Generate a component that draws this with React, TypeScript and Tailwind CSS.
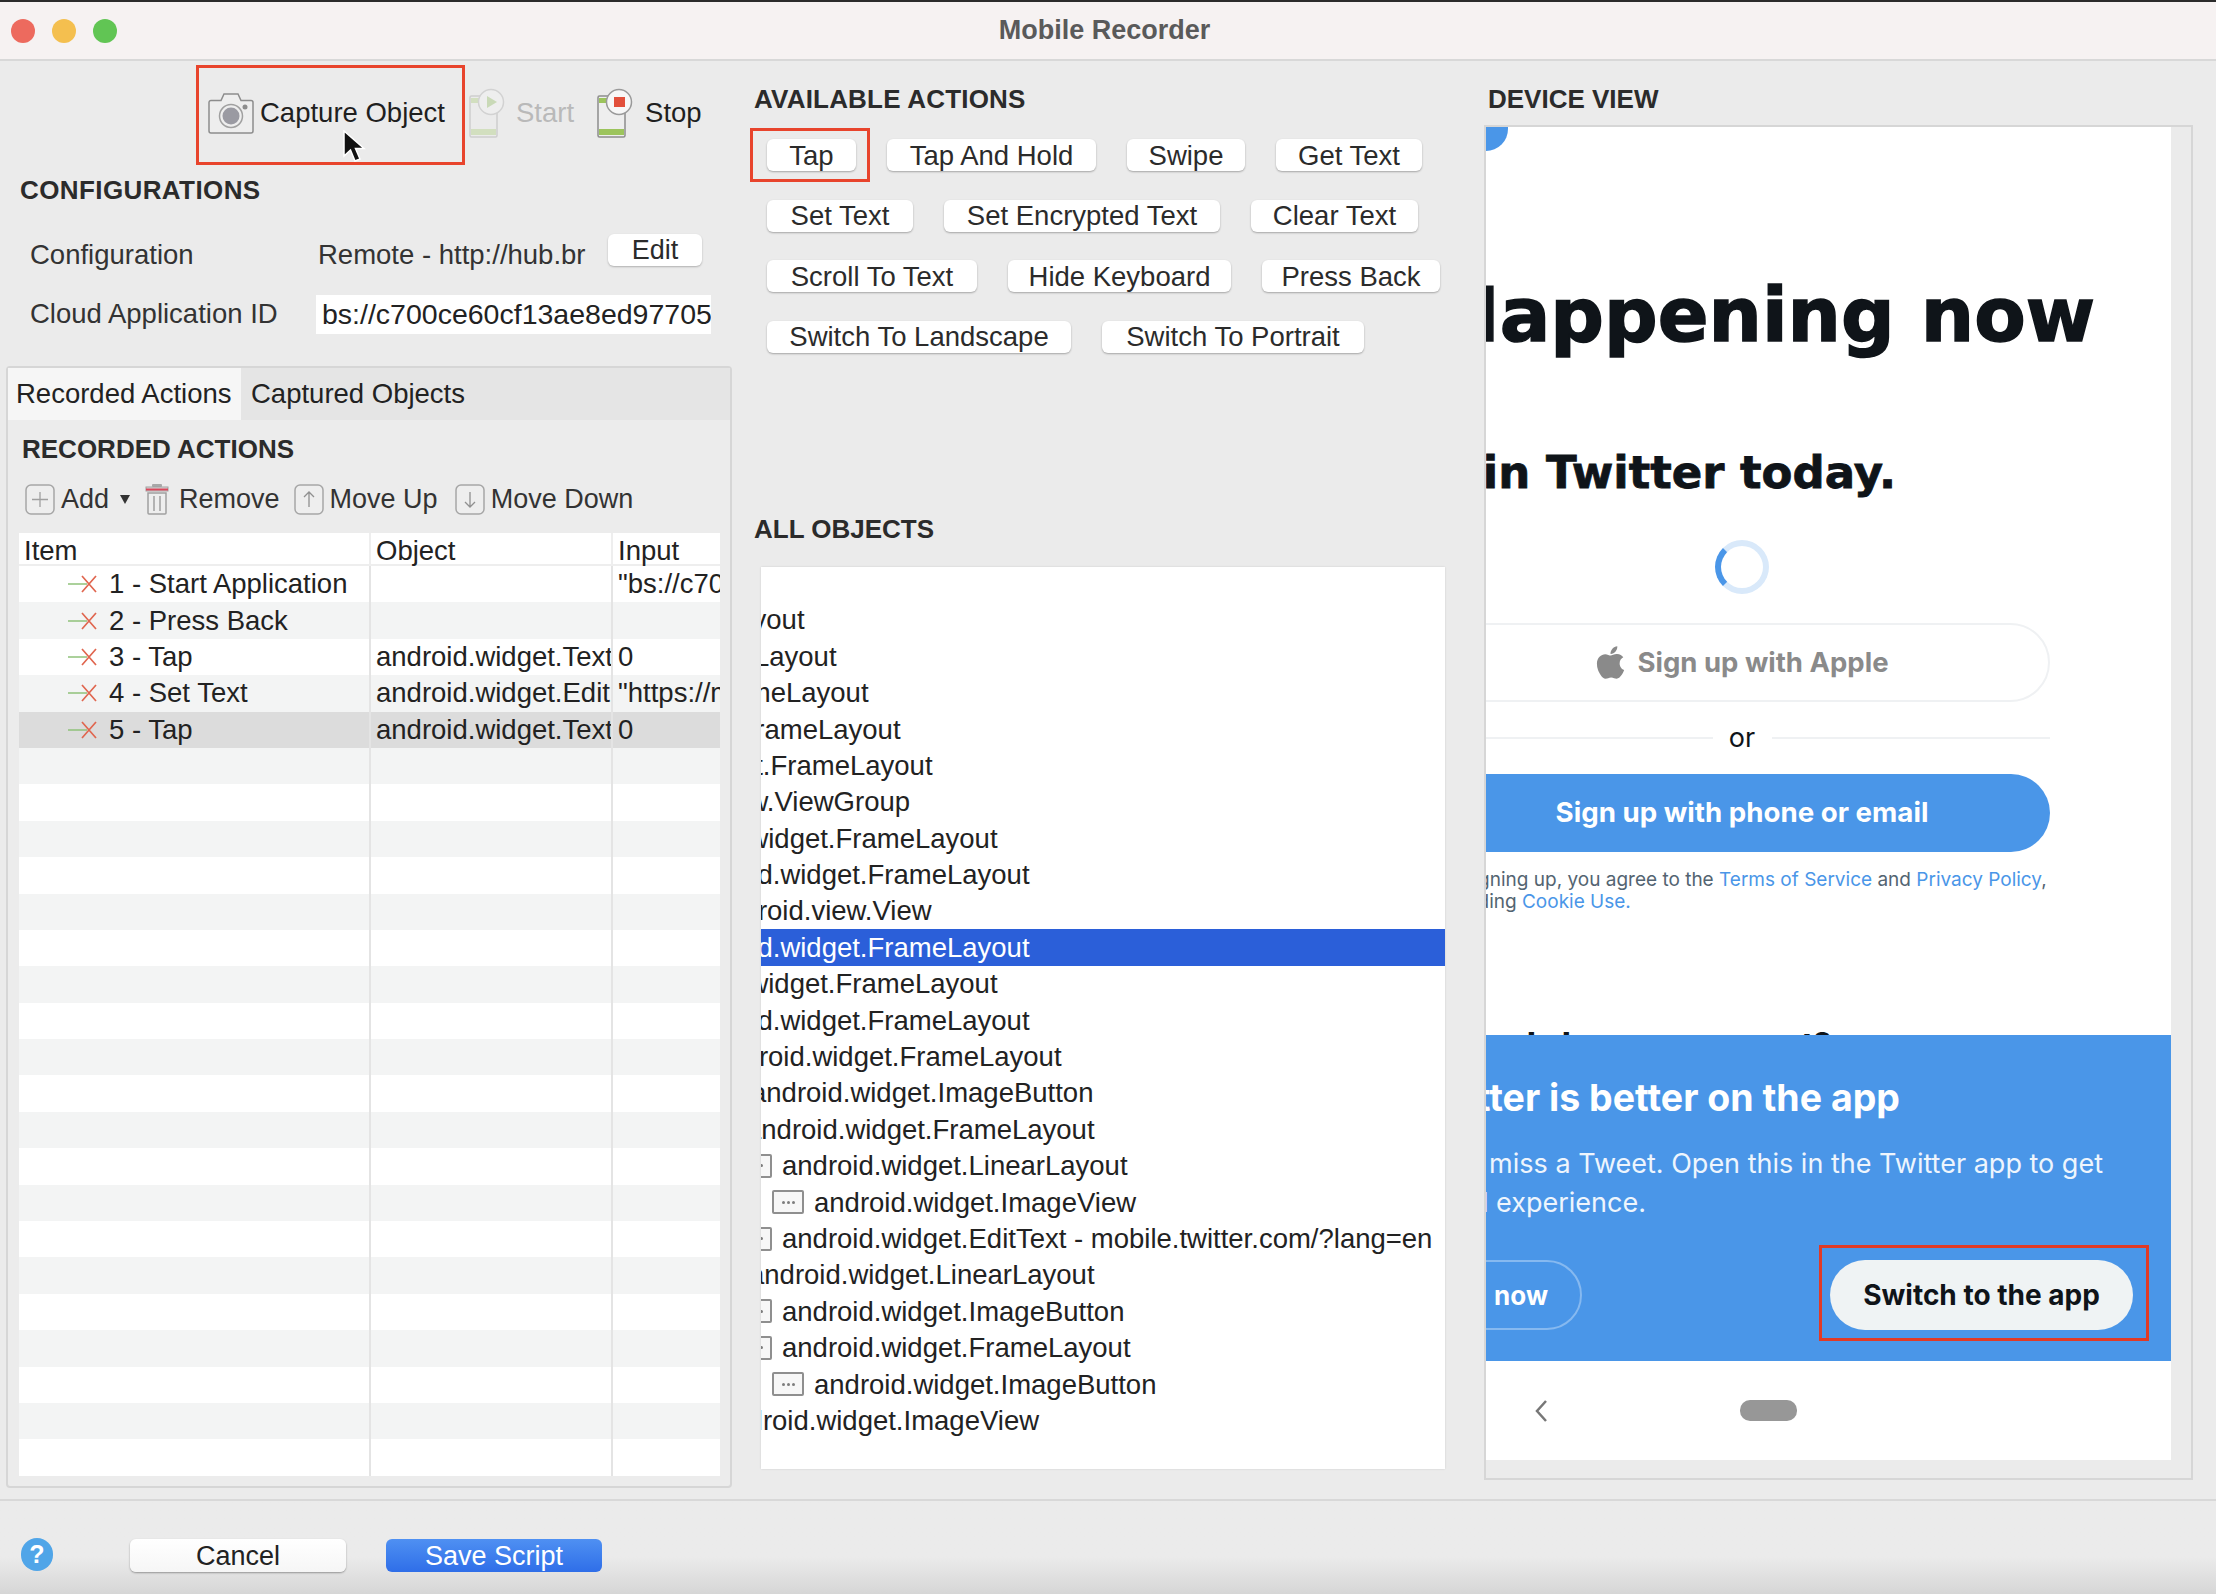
import React from "react"
import { FaApple } from "react-icons/fa"

const actionRows = [
  [
    { label: "Tap", w: "w-[89px]", marked: true },
    { label: "Tap And Hold", w: "w-[209px]" },
    { label: "Swipe", w: "w-[118px]" },
    { label: "Get Text", w: "w-[146px]" },
  ],
  [
    { label: "Set Text", w: "w-[146px]" },
    { label: "Set Encrypted Text", w: "w-[276px]" },
    { label: "Clear Text", w: "w-[167px]" },
  ],
  [
    { label: "Scroll To Text", w: "w-[210px]" },
    { label: "Hide Keyboard", w: "w-[223px]" },
    { label: "Press Back", w: "w-[178px]" },
  ],
  [
    { label: "Switch To Landscape", w: "w-[304px]" },
    { label: "Switch To Portrait", w: "w-[262px]" },
  ],
]

const recorded = [
  { item: "1 - Start Application", object: "", input: "\"bs://c700ce60cf13ae8ed97705" },
  { item: "2 - Press Back", object: "", input: "" },
  { item: "3 - Tap", object: "android.widget.Text", input: "0" },
  { item: "4 - Set Text", object: "android.widget.Edit", input: "\"https://mobile.twitter.com" },
  { item: "5 - Tap", object: "android.widget.Text", input: "0", selected: true },
  ...Array.from({ length: 20 }, () => ({ item: "", object: "", input: "" })),
]

const objects = [
  { text: "android.widget.FrameLayout", ml: "ml-[-305px]" },
  { text: "android.widget.LinearLayout", ml: "ml-[-270px]" },
  { text: "android.widget.FrameLayout", ml: "ml-[-241px]" },
  { text: "android.widget.FrameLayout", ml: "ml-[-209px]" },
  { text: "android.widget.FrameLayout", ml: "ml-[-177px]" },
  { text: "android.view.ViewGroup", ml: "ml-[-147px]" },
  { text: "android.widget.FrameLayout", ml: "ml-[-112px]" },
  { text: "android.widget.FrameLayout", ml: "ml-[-80px]" },
  { text: "android.view.View", ml: "ml-[-49px]" },
  { text: "android.widget.FrameLayout", ml: "ml-[-80px]", selected: true },
  { text: "android.widget.FrameLayout", ml: "ml-[-112px]" },
  { text: "android.widget.FrameLayout", ml: "ml-[-80px]" },
  { text: "android.widget.FrameLayout", ml: "ml-[-48px]" },
  { text: "android.widget.ImageButton", ml: "ml-[-10px]" },
  { text: "android.widget.FrameLayout", ml: "ml-[-15px]" },
  { text: "android.widget.LinearLayout", ml: "ml-[-21px]", icon: true },
  { text: "android.widget.ImageView", ml: "ml-[11px]", icon: true },
  { text: "android.widget.EditText - mobile.twitter.com/?lang=en", ml: "ml-[-21px]", icon: true },
  { text: "android.widget.LinearLayout", ml: "ml-[-12px]" },
  { text: "android.widget.ImageButton", ml: "ml-[-21px]", icon: true },
  { text: "android.widget.FrameLayout", ml: "ml-[-21px]", icon: true },
  { text: "android.widget.ImageButton", ml: "ml-[11px]", icon: true },
  { text: "android.widget.ImageView", ml: "ml-[-44px]" },
]

function CameraIcon() {
  return (
    <svg width="48" height="42" viewBox="0 0 48 42" fill="none">
      <path d="M2 10.5a2 2 0 0 1 2-2h10l3-6.5h14l3 6.500h10a2 2 0 0 1 2 2V39a2 2 0 0 1-2 2H4a2 2 0 0 1-2-2z" fill="#eeeeee" stroke="#8d8d8d" strokeWidth="1.5" />
      <circle cx="24" cy="24" r="11.500" fill="none" stroke="#a0a0a0" strokeWidth="1.500" />
      <circle cx="24" cy="24" r="8.500" fill="#9a9aa2" />
      <circle cx="38" cy="15" r="2.500" fill="#8d8d8d" />
    </svg>
  )
}

function PhoneIcon({ faded, stop }: { faded?: boolean; stop?: boolean }) {
  return (
    <svg width="38" height="50" viewBox="0 0 38 50" fill="none" className={faded ? "opacity-30" : ""}>
      <rect x="1" y="8" width="27" height="41" rx="1.500" fill="#eeeeee" stroke="#8d8d8d" strokeWidth="1.500" />
      <rect x="2" y="10" width="25" height="5" fill="#9cc45c" />
      <rect x="2" y="41" width="25" height="6" fill="#9cc45c" />
      <circle cx="22" cy="14" r="12.500" fill="#f7f7f7" stroke="#9a9a9a" strokeWidth="1.500" />
      {stop ? <rect x="17" y="9" width="11" height="10" fill="#e2503c" /> : <path d="M18 8l10 6-10 6z" fill="#7cb342" />}
    </svg>
  )
}

function TrashIcon() {
  return (
    <svg width="24" height="32" viewBox="0 0 24 32" fill="none">
      <rect x="7" y="1" width="10" height="3" rx="1" fill="#a8a8a8" />
      <rect x="1" y="4" width="22" height="4" fill="#d8d8d8" stroke="#a0a0a0" />
      <rect x="1" y="5.500" width="22" height="2" fill="#d9475b" />
      <path d="M3 10h18v20a1 1 0 0 1-1 1H4a1 1 0 0 1-1-1z" fill="#eeeeee" stroke="#a0a0a0" strokeWidth="1.500" />
      <path d="M9 13v15M15 13v15" stroke="#a0a0a0" strokeWidth="1.500" />
    </svg>
  )
}

function BoxIcon({ kind }: { kind: "plus" | "up" | "down" }) {
  return (
    <svg width="30" height="31" viewBox="0 0 30 31" fill="none">
      <rect x="1" y="1" width="28" height="29" rx="5" fill="#eeeeee" stroke="#a6a6a6" strokeWidth="1.500" />
      {kind === "plus" && <path d="M15 8v15M7 15.500h16" stroke="#a0a0a0" strokeWidth="1.300" />}
      {kind === "up" && <path d="M15 23V8M10 13l5-5 5 5" stroke="#909090" strokeWidth="1.300" />}
      {kind === "down" && <path d="M15 8v15M10 18l5 5 5-5" stroke="#909090" strokeWidth="1.300" />}
    </svg>
  )
}

function DeleteMark() {
  return (
    <svg width="29" height="20" viewBox="0 0 29 20" fill="none" className="shrink-0">
      <path d="M0 10h19" stroke="#8fc27a" strokeWidth="1.500" />
      <path d="M14 2l14 16M28 2L14 18" stroke="#e0664f" strokeWidth="1.700" />
    </svg>
  )
}

function NodeIcon() {
  return (
    <span className="flex h-[24px] w-[32px] shrink-0 items-center justify-center gap-[2px] rounded-[2px] border-2 border-[#8f8f8f] bg-[#f7f7f7]">
      <span className="h-[3px] w-[3px] rounded-full bg-[#7d7d7d]" />
      <span className="h-[3px] w-[3px] rounded-full bg-[#7d7d7d]" />
      <span className="h-[3px] w-[3px] rounded-full bg-[#7d7d7d]" />
    </span>
  )
}

function Heading({ children, className }: { children: React.ReactNode; className?: string }) {
  return <div className={`flex h-[40px] items-center text-[26px] font-bold text-[#2b2b2b] ${className ?? ""}`}>{children}</div>
}

function LeftPanel() {
  return (
    <div className="flex w-[735px] shrink-0 flex-col">
      <div className="relative flex h-[109px] pl-[196px] pt-[4px]">
        <div className="flex h-[100px] w-[269px] items-center gap-[5px] border-[3px] border-[#e8442c] pb-[5px] pl-[8px]">
          <CameraIcon />
          <span className="text-[27.500px] leading-none text-[#1f1f1f]">Capture Object</span>
        </div>
        <div className="ml-[4px] flex h-[100px] items-center pb-[4px]">
          <PhoneIcon faded />
          <span className="ml-[9px] text-[27.500px] text-[#b9b9b9]">Start</span>
          <span className="ml-[23px]"><PhoneIcon stop /></span>
          <span className="ml-[10px] text-[27.500px] text-[#1f1f1f]">Stop</span>
        </div>
        <svg width="24" height="33" viewBox="0 0 24 33" className="absolute left-[342px] top-[69px]">
          <path d="M2 1v25l6.500-6 4.500 11 5-2-4.500-10.500H22z" fill="#111111" stroke="#ffffff" strokeWidth="1.500" />
        </svg>
      </div>
      <Heading className="pl-[20px] tracking-[0.4px]">CONFIGURATIONS</Heading>
      <div className="mt-[24px] flex h-[42px] text-[27.500px] leading-[42px] text-[#333333]">
        <span className="w-[318px] pl-[30px]">Configuration</span>
        <span className="w-[268px] overflow-hidden whitespace-nowrap">Remote - http://hub.browserstack.com</span>
        <button className="ml-[22px] h-[32px] w-[94px] rounded-[6px] bg-white text-[27px] leading-[30px] text-[#2b2b2b] shadow-[0_1px_2px_rgba(0,0,0,0.25)]">Edit</button>
      </div>
      <div className="mt-[19px] flex h-[39px] text-[27.500px] leading-[38px] text-[#333333]">
        <span className="w-[316px] pl-[30px]">Cloud Application ID</span>
        <span className="w-[395px] overflow-hidden whitespace-nowrap bg-white pl-[6px] text-[28.500px] text-[#222222]">bs://c700ce60cf13ae8ed977055</span>
      </div>
      <div className="mb-[11px] ml-[6px] mt-[32px] flex w-[726px] flex-1 flex-col rounded-[4px] border-2 border-[#d6d6d6] bg-[#ececec]">
        <div className="flex h-[52px] bg-[#e5e5e5] text-[27.500px] leading-[52px] text-[#222222]">
          <span className="w-[233px] bg-[#f6f6f6] pl-[8px]">Recorded Actions</span>
          <span className="pl-[10px]">Captured Objects</span>
        </div>
        <Heading className="mt-[9px] pl-[14px]">RECORDED ACTIONS</Heading>
        <div className="mb-[2px] flex h-[60px] items-center pl-[17px] text-[27px] text-[#333333]">
          <BoxIcon kind="plus" />
          <span className="ml-[6px]">Add</span>
          <svg width="10" height="9" viewBox="0 0 10 9" className="ml-[11px]"><path d="M0 0h10L5 9z" fill="#333333" /></svg>
          <span className="ml-[15px]"><TrashIcon /></span>
          <span className="ml-[10px]">Remove</span>
          <span className="ml-[14px]"><BoxIcon kind="up" /></span>
          <span className="ml-[6px]">Move Up</span>
          <span className="ml-[17px]"><BoxIcon kind="down" /></span>
          <span className="ml-[6px]">Move Down</span>
        </div>
        <div className="ml-[11px] mt-[2px] w-[701px] overflow-hidden bg-white text-[27.500px] text-[#222222]">
          <div className="grid h-[33px] grid-cols-[352px_242px_107px] border-b-2 border-[#eeeeee] leading-[36px]">
            <span className="border-r-2 border-[#eeeeee] pl-[5px]">Item</span>
            <span className="border-r-2 border-[#eeeeee] pl-[5px]">Object</span>
            <span className="pl-[5px]">Input</span>
          </div>
          {recorded.map((row, i) => (
            <div
              key={i}
              className={`grid h-[36.400px] grid-cols-[352px_242px_107px] leading-[36px] ${row.selected ? "bg-[#dcdcdc]" : i % 2 === 0 ? "bg-white" : "bg-[#f3f4f4]"}`}
            >
              <div className="flex items-center border-r-2 border-[#e4e4e4] pl-[49px]">
                {row.item && <DeleteMark />}
                <span className="ml-[12px]">{row.item}</span>
              </div>
              <div className="overflow-hidden whitespace-nowrap border-r-2 border-[#e4e4e4] pl-[5px]">{row.object}</div>
              <div className="overflow-hidden whitespace-nowrap pl-[5px]">{row.input}</div>
            </div>
          ))}
        </div>
      </div>
    </div>
  )
}

function CenterPanel() {
  return (
    <div className="flex w-[735px] shrink-0 flex-col pt-[18px]">
      <Heading className="pl-[19px] tracking-[0.2px]">AVAILABLE ACTIONS</Heading>
      <div className="ml-[32px] mt-[20px] flex flex-col gap-[28.600px]">
        {actionRows.map((row, i) => (
          <div key={i} className="flex gap-[31px]">
            {row.map((a) => (
              <div key={a.label} className="relative flex">
                <button className={`h-[32px] rounded-[6px] bg-white text-center text-[27.500px] leading-[31px] text-[#2b2b2b] shadow-[0_1px_2px_rgba(0,0,0,0.3)] ${a.w}`}>
                  {a.label}
                </button>
                {a.marked && <div className="absolute -bottom-[11px] -left-[17px] -right-[14px] -top-[11px] border-[3px] border-[#e8442c]" />}
              </div>
            ))}
          </div>
        ))}
      </div>
      <Heading className="mt-[157px] pl-[19px]">ALL OBJECTS</Heading>
      <div className="ml-[26px] mt-[17px] h-[902px] w-[684px] overflow-hidden bg-white pt-[35px] text-[27.500px] text-[#222222] shadow-[0_0_2px_rgba(0,0,0,0.12)]">
        {objects.map((o, i) => (
          <div key={i} className={`flex h-[36.400px] items-center whitespace-nowrap ${o.selected ? "bg-[#2b5fd9] text-white" : ""}`}>
            <div className={`flex items-center ${o.ml}`}>
              {o.icon && <NodeIcon />}
              <span className={o.icon ? "ml-[10px]" : ""}>{o.text}</span>
            </div>
          </div>
        ))}
      </div>
    </div>
  )
}

function PhoneScreen() {
  return (
    <div className="relative flex h-[1333px] w-[685px] flex-col overflow-hidden bg-white font-['Inter',sans-serif]">
      <div className="absolute -left-[22px] -top-[24px] h-[48px] w-[44px] rounded-full bg-[#4a96e8]" />
      <div className="ml-[-52px] w-[616px]">
        <div className="mt-[138px] flex h-[100px] w-[661px] items-center justify-end whitespace-nowrap font-['DejaVu_Sans',sans-serif] text-[75px] font-bold leading-none text-[#0f1419] [-webkit-text-stroke:1.5px_#0f1419]">
          Happening now
        </div>
        <div className="mt-[77px] flex h-[60px] w-[462px] items-center justify-end whitespace-nowrap font-['DejaVu_Sans',sans-serif] text-[45px] font-bold leading-none text-[#0f1419] [-webkit-text-stroke:0.8px_#0f1419]">
          Join Twitter today.
        </div>
        <div className="mt-[38px] flex justify-center">
          <div className="h-[54px] w-[54px] rounded-full border-[6px] border-[#d9e9fa] border-l-[#4a96e8]" />
        </div>
        <div className="mt-[29px] flex h-[79px] items-center justify-center gap-[11px] rounded-full border-2 border-[#eff1f3] text-[27.500px] font-bold text-[#8a8a8a]">
          <FaApple className="h-[37px] w-[31px]" />
          <span>Sign up with Apple</span>
        </div>
        <div className="flex h-[72px] items-center">
          <div className="h-[2px] flex-1 bg-[#eff1f3]" />
          <span className="w-[59px] text-center text-[27px] text-[#0f1419]">or</span>
          <div className="h-[2px] flex-1 bg-[#eff1f3]" />
        </div>
        <div className="flex h-[78px] items-center justify-center rounded-full bg-[#4a96e8] text-[27.700px] font-bold text-white">Sign up with phone or email</div>
        <div className="mt-[17px] whitespace-nowrap pl-[1px] text-[19px] leading-[22px] text-[#536471]">
          <div>
            By signing up, you agree to the <span className="text-[#4a96e8]">Terms of Service</span> and <span className="text-[#4a96e8]">Privacy Policy</span>,
          </div>
          <div>
            including <span className="text-[#4a96e8]">Cookie Use.</span>
          </div>
        </div>
        <div className="h-[122px] overflow-hidden whitespace-nowrap pt-[111px] text-[31px] font-extrabold leading-[40px] text-[#0f1419]">Already have an account?</div>
      </div>
      <div className="h-[326px] bg-[#4a96e8] pt-[38px] text-white">
        <div className="flex h-[50px] w-[414px] items-center justify-end whitespace-nowrap text-[37.500px] font-bold">Twitter is better on the app</div>
        <div className="mt-[21px] flex w-[617px] justify-end whitespace-nowrap text-[27px] leading-[39px] text-[#eef5fd]">Don’t miss a Tweet. Open this in the Twitter app to get</div>
        <div className="flex w-[160px] justify-end whitespace-nowrap text-[27px] leading-[39px] text-[#eef5fd]">the full experience.</div>
        <div className="mt-[38px] flex h-[70px]">
          <div className="ml-[-64px] flex w-[160px] items-center justify-end whitespace-nowrap rounded-full border-2 border-[#86b9f0] pr-[32px] text-[26px] font-bold [word-spacing:8px]">Not now</div>
          <div className="relative ml-auto mr-[38px] flex w-[303px] items-center justify-center rounded-full bg-[#eff3f4] text-[28px] font-bold text-[#0f1419]">
            Switch to the app
            <div className="absolute -bottom-[11px] -left-[11px] -right-[16px] -top-[15px] border-[3px] border-[#e03a26]" />
          </div>
        </div>
      </div>
      <div className="flex flex-1 items-center">
        <svg width="14" height="22" viewBox="0 0 14 22" className="ml-[48px]"><path d="M12 1L3 11l9 10" fill="none" stroke="#777777" strokeWidth="2.500" /></svg>
        <div className="ml-[192px] h-[21px] w-[57px] rounded-[10px] bg-[#979797]" />
      </div>
    </div>
  )
}

function DevicePanel() {
  return (
    <div className="flex flex-1 flex-col pt-[18px]">
      <Heading className="pl-[18px]">DEVICE VIEW</Heading>
      <div className="ml-[14px] mt-[6px] h-[1355px] w-[709px] border-2 border-[#d6d6d6]">
        <PhoneScreen />
      </div>
    </div>
  )
}

export default function App() {
  return (
    <div className="flex h-[1594px] w-[2216px] flex-col overflow-hidden bg-[#ebebeb] font-['Liberation_Sans',Arial,sans-serif]">
      <div className="h-[2px] bg-[#2b2b2b]" />
      <div className="flex h-[59px] items-center border-b-2 border-[#d8d8d8] bg-[#f6f2f2]">
        <div className="ml-[11px] mt-[1px] flex gap-[17px]">
          <span className="h-[24px] w-[24px] rounded-full bg-[#ed6a5e]" />
          <span className="h-[24px] w-[24px] rounded-full bg-[#f4bf4f]" />
          <span className="h-[24px] w-[24px] rounded-full bg-[#61c554]" />
        </div>
        <div className="flex-1 pr-[124px] text-center text-[27px] font-bold text-[#5a5a5a]">Mobile Recorder</div>
      </div>
      <div className="flex h-[1440px] border-b-2 border-[#d8d8d8]">
        <LeftPanel />
        <CenterPanel />
        <DevicePanel />
      </div>
      <div className="flex flex-1 items-start bg-gradient-to-b from-[#ebebeb] from-60% to-[#d6d6d6] pt-[38px]">
        <div className="ml-[21px] mt-[-1px] flex h-[33px] w-[32px] items-center justify-center rounded-full bg-[#50a5e8] text-[25px] font-bold text-white">?</div>
        <button className="ml-[77px] h-[33px] w-[216px] rounded-[6px] bg-gradient-to-b from-white to-[#f6f6f6] text-[27px] leading-[32px] text-[#222222] shadow-[0_1px_2px_rgba(0,0,0,0.35)]">Cancel</button>
        <button className="ml-[40px] h-[33px] w-[216px] rounded-[6px] bg-gradient-to-b from-[#4f90f2] to-[#2f6ee8] text-[27px] leading-[32px] text-white">Save Script</button>
      </div>
    </div>
  )
}
